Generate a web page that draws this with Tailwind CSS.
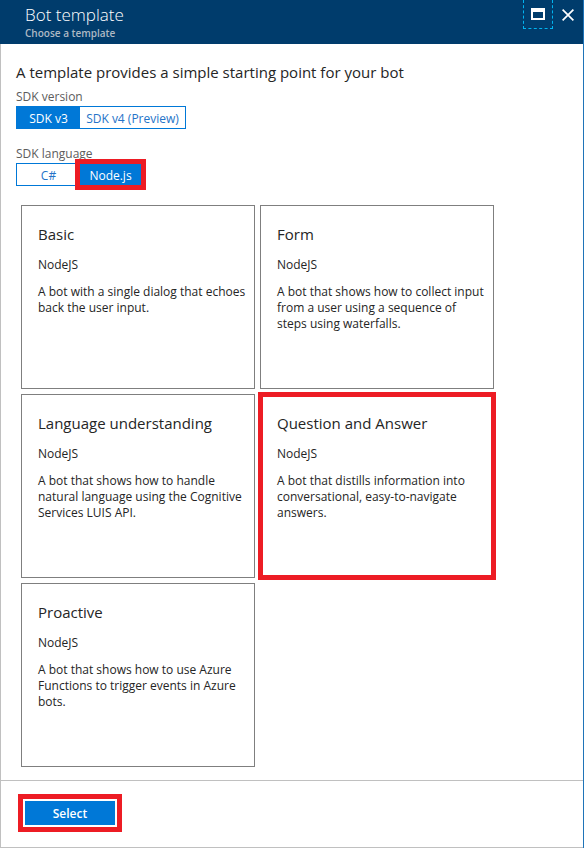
<!DOCTYPE html>
<html lang="en">
<head>
<meta charset="utf-8">
<meta name="viewport" content="width=device-width, initial-scale=1">
<title>Bot template</title>
<script src="https://cdn.jsdelivr.net/npm/@tailwindcss/browser@4"></script>
</head>
<body class="min-h-screen flex flex-col bg-white border-r border-[#1f74b8] font-['Open_Sans','Noto_Sans',sans-serif] text-xs text-[#252525]">
<header class="h-11 shrink-0 bg-[#003c6c] flex items-start">
  <div class="flex-1 pl-[25px] pt-[3px]">
    <h1 class="text-[17px] leading-6 font-light text-white">Bot template</h1>
    <p class="text-[10px] leading-3 font-semibold text-[#aeb9c4]">Choose a template</p>
  </div>
  <button type="button" aria-label="Maximize" class="w-[30px] h-[29px] border border-t-0 border-dashed border-[#00b4f0] flex items-center justify-center">
    <svg class="w-3.5 h-3" viewBox="0 0 14 12" fill="#fff" fill-rule="evenodd" shape-rendering="crispEdges" aria-hidden="true"><path d="M0 0H14V12H0ZM2 4V10H12V4Z"/></svg>
  </button>
  <button type="button" aria-label="Close" class="w-[30px] h-[29px] flex items-center justify-center">
    <svg class="w-3 h-3" viewBox="0 0 12 12" fill="none" stroke="#fff" stroke-width="1.7" aria-hidden="true"><path d="M.6.6 11.4 11.4M11.4.6.6 11.4"/></svg>
  </button>
</header>
<main class="flex-1 border-l border-[#c0c0c0] pl-[15px] pt-4 pb-3">
  <h2 class="text-[15px] leading-6">A template provides a simple starting point for your bot</h2>
  <fieldset class="mt-1">
    <legend class="h-[18px] leading-[18px] text-[#5c5c5c]">SDK version</legend>
    <div class="inline-flex h-[23px] border border-[#0078d7] text-[#2473c8]">
      <label class="w-[63px] pt-0.5 flex items-center justify-center bg-[#0078d7] text-white"><input type="radio" name="version" class="sr-only" checked>SDK v3</label>
      <label class="w-[105px] pt-0.5 flex items-center justify-center whitespace-nowrap"><input type="radio" name="version" class="sr-only">SDK v4 (Preview)</label>
    </div>
  </fieldset>
  <fieldset class="mt-4">
    <legend class="h-[18px] leading-[18px] text-[#5c5c5c]">SDK language</legend>
    <div class="inline-flex h-[23px] border border-[#0078d7] text-[#2473c8]">
      <label class="w-[63px] pt-0.5 flex items-center justify-center"><input type="radio" name="language" class="sr-only">C#</label>
      <label class="relative w-[61px] pt-0.5 flex items-center justify-center bg-[#0078d7] text-white"><input type="radio" name="language" class="sr-only" checked>Node.js<span class="absolute -inset-[5px] border-5 border-[#ed1c24]"></span></label>
    </div>
  </fieldset>
  <div class="mt-[19px] pl-[5px] flex flex-wrap gap-[5px]">
    <button type="button" class="w-[234px] h-[184px] border border-[#7f7f7f] pl-4 pt-4 flex flex-col items-start text-left leading-4">
      <span class="text-[15px] leading-6">Basic</span>
      <span class="mt-[11px]">NodeJS</span>
      <span class="mt-[11px]">A bot with a single dialog that echoes<br>back the user input.</span>
    </button>
    <button type="button" class="w-[234px] h-[184px] border border-[#7f7f7f] pl-4 pt-4 flex flex-col items-start text-left leading-4">
      <span class="text-[15px] leading-6">Form</span>
      <span class="mt-[11px]">NodeJS</span>
      <span class="mt-[11px]">A bot that shows how to collect input<br>from a user using a sequence of<br>steps using waterfalls.</span>
    </button>
    <button type="button" class="w-[234px] h-[184px] border border-[#7f7f7f] pl-4 pt-4 flex flex-col items-start text-left leading-4">
      <span class="text-[15px] leading-6">Language understanding</span>
      <span class="mt-[11px]">NodeJS</span>
      <span class="mt-[11px]">A bot that shows how to handle<br>natural language using the Cognitive<br>Services LUIS API.</span>
    </button>
    <button type="button" class="relative w-[234px] h-[184px] border border-[#7f7f7f] pl-4 pt-4 flex flex-col items-start text-left leading-4">
      <span class="text-[15px] leading-6">Question and Answer</span>
      <span class="mt-[11px]">NodeJS</span>
      <span class="mt-[11px]">A bot that distills information into<br>conversational, easy-to-navigate<br>answers.</span>
      <span class="absolute -inset-[3px] border-5 border-[#ed1c24]"></span>
    </button>
    <button type="button" class="w-[234px] h-[184px] border border-[#7f7f7f] pl-4 pt-4 flex flex-col items-start text-left leading-4">
      <span class="text-[15px] leading-6">Proactive</span>
      <span class="mt-[11px]">NodeJS</span>
      <span class="mt-[11px]">A bot that shows how to use Azure<br>Functions to trigger events in Azure<br>bots.</span>
    </button>
  </div>
</main>
<footer class="border border-r-0 border-[#c0c0c0] pl-[17px] pt-[13px] pb-[15px]">
  <div class="w-fit border-5 border-[#ed1c24] p-0.5">
    <button type="button" class="block w-[90px] h-6 pt-0.5 bg-[#0078d7] text-white font-semibold">Select</button>
  </div>
</footer>
</body>
</html>
